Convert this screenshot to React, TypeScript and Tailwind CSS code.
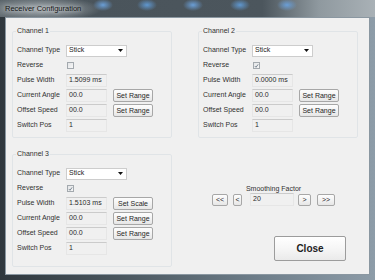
import type { ReactNode } from 'react';

const font = 'font-["Liberation_Sans",Arial,sans-serif]';

function Btn({ children, w, h = 'h-[13px]', extra = '' }: { children: ReactNode; w: string; h?: string; extra?: string }) {
  return (
    <button
      className={`${w} ${h} ${extra} flex items-center justify-center rounded-[2px] border border-[#a7a7a7] bg-linear-to-b from-[#fdfdfd] via-[#f3f3f3] to-[#e6e6e6] text-[7px] leading-none text-[#262626]`}
    >
      {children}
    </button>
  );
}

function ReadBox({ value, w = 'w-[41px]' }: { value: string; w?: string }) {
  return (
    <div className={`${w} flex h-[13px] items-center border border-[#e6e6e6] border-t-[#cbcbcb] pl-[2px] text-[7px] text-[#2a2a2a]`}>
      {value}
    </div>
  );
}

function Row({ label, children }: { label: string; children?: ReactNode }) {
  return (
    <div className="flex h-[15px] items-center">
      <span className="w-[53px] shrink-0 pl-[4px] text-[7px] text-[#303030]">{label}</span>
      {children}
    </div>
  );
}

function Check({ on }: { on: boolean }) {
  return (
    <div className="ml-[1px] flex h-[7px] w-[7px] items-center justify-center border border-[#a3a9ae] bg-linear-to-br from-[#e3e5e7] to-[#f7f7f7]">
      {on && (
        <svg viewBox="0 0 7 7" className="h-[6px] w-[6px]">
          <path d="M1.2 3.6 L2.8 5.3 L5.8 1.2" fill="none" stroke="#4a5a6c" strokeWidth="1" />
        </svg>
      )}
    </div>
  );
}

function Channel({
  name,
  reverse,
  pulse,
  pulseBtn,
  pb,
}: {
  name: string;
  reverse: boolean;
  pulse: string;
  pulseBtn?: string;
  pb: string;
}) {
  return (
    <fieldset className={`w-[160px] rounded-[2px] border border-[#e0e4e7] px-0 pt-[7px] ${pb}`}>
      <legend className="ml-[3px] px-[1px] text-[7px] leading-[10px] text-[#303030]">{name}</legend>
      <Row label="Channel Type">
        <div className="flex h-[12px] w-[61px] items-center justify-between border border-[#cdcdcd] bg-white pl-[2px] pr-[3px] text-[7px] text-[#1e1e1e]">
          <span>Stick</span>
          <svg viewBox="0 0 5 3" className="h-[3px] w-[5px]">
            <path d="M0 0 H5 L2.5 3 Z" fill="#111" />
          </svg>
        </div>
      </Row>
      <Row label="Reverse">
        <Check on={reverse} />
      </Row>
      <Row label="Pulse Width">
        <ReadBox value={pulse} />
        {pulseBtn && (
          <Btn w="w-[40px]" extra="ml-[6px]">
            {pulseBtn}
          </Btn>
        )}
      </Row>
      <Row label="Current Angle">
        <ReadBox value="00.0" />
        <Btn w="w-[40px]" extra="ml-[6px]">
          Set Range
        </Btn>
      </Row>
      <Row label="Offset Speed">
        <ReadBox value="00.0" />
        <Btn w="w-[40px]" extra="ml-[6px]">
          Set Range
        </Btn>
      </Row>
      <Row label="Switch Pos">
        <ReadBox value="1" />
      </Row>
    </fieldset>
  );
}

export default function App() {
  return (
    <div
      className={`${font} flex h-[280px] w-[375px] flex-col overflow-hidden bg-[linear-gradient(90deg,#2f373d_0%,#48545c_30%,#6f7f8b_70%,#8d9ca8_100%)]`}
    >
      {/* title bar */}
      <div className="flex h-[17px] items-center bg-[radial-gradient(10px_6px_at_103px_5px,#6a9ed6,transparent),radial-gradient(10px_6px_at_147px_5px,#5f97cf,transparent),radial-gradient(10px_6px_at_193px_5px,#6a9ed6,transparent),radial-gradient(10px_6px_at_240px_5px,#5f97cf,transparent),radial-gradient(10px_6px_at_287px_5px,#6a9ed6,transparent),radial-gradient(60px_12px_at_42px_9px,#aab1b5,transparent),linear-gradient(90deg,#5b656b_0%,#4a545b_25%,#4c565d_70%,#8f999f_85%,#a9b1b6_100%)] pl-[5px]">
        <span className="text-[7.5px] text-[#161616] [text-shadow:0_0_4px_#e8ecef]">Receiver Configuration</span>
      </div>

      {/* client area */}
      <div className="mx-[5px] mb-[5px] grid flex-1 grid-cols-[186px_160px] content-start gap-y-[11px] border border-[#8a97a1] bg-[#f0f0f0] pl-[6px] pt-[8px]">
        <Channel name="Channel 1" reverse={false} pulse="1.5099 ms" pb="pb-[4px]" />
        <Channel name="Channel 2" reverse={true} pulse="0.0000 ms" pb="pb-[4px]" />
        <Channel name="Channel 3" reverse={true} pulse="1.5103 ms" pulseBtn="Set Scale" pb="pb-[10px]" />

        <div className="flex flex-col">
          <div className="ml-[14px] mt-[35px] inline-flex w-[123px] flex-col items-center">
            <span className="h-[9px] text-[7px] leading-[9px] text-[#303030]">Smoothing Factor</span>
            <div className="flex w-full items-center">
              <Btn w="w-[16px]" h="h-[12px]" extra="text-[#777]">
                &lt;&lt;
              </Btn>
              <Btn w="w-[9px]" h="h-[12px]" extra="ml-[5px] border-[#3c80bd] text-[#555]">
                &lt;
              </Btn>
              <div className="ml-[8px]">
                <ReadBox value="20" w="w-[44px]" />
              </div>
              <Btn w="w-[13px]" h="h-[12px]" extra="ml-[4px] text-[#777]">
                &gt;
              </Btn>
              <Btn w="w-[18px]" h="h-[12px]" extra="ml-[6px] text-[#777]">
                &gt;&gt;
              </Btn>
            </div>
          </div>
          <div className="mt-[30px] flex justify-end pr-[12px]">
            <button className="flex h-[25px] w-[72px] items-center justify-center rounded-[2px] border border-[#9c9c9c] bg-linear-to-b from-[#ffffff] via-[#f6f6f6] to-[#eaeaea] text-[10px] font-bold text-[#1e1e1e]">
              Close
            </button>
          </div>
        </div>
      </div>
    </div>
  );
}
